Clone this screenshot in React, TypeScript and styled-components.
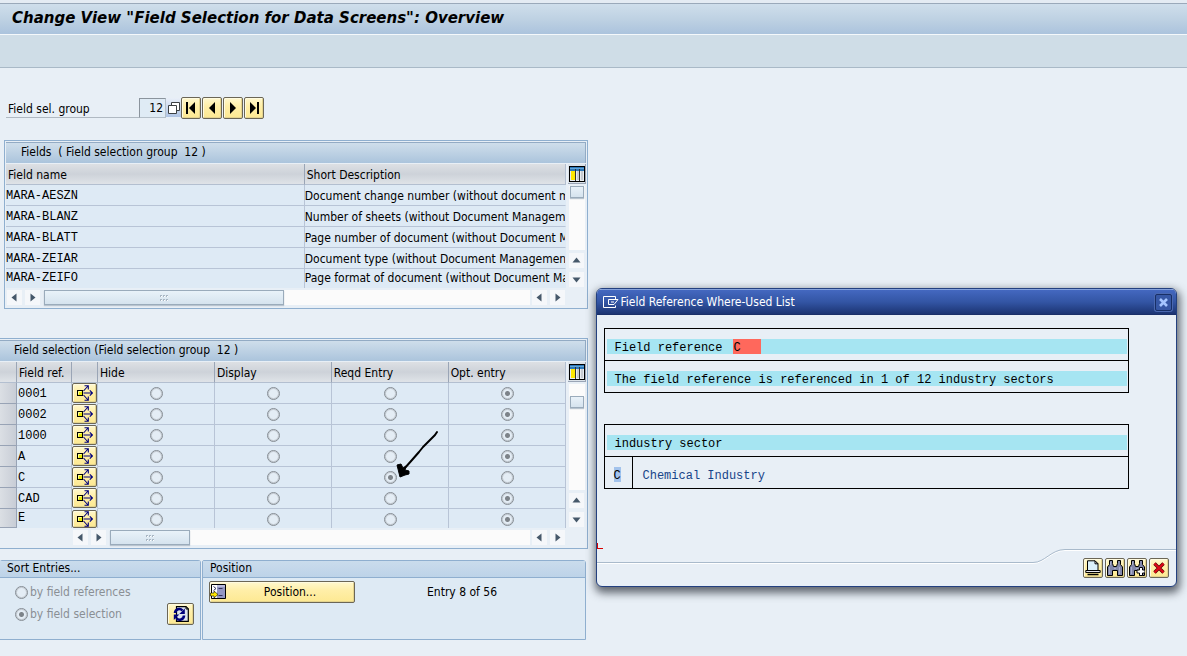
import React from "react";
import styled, { createGlobalStyle } from "styled-components";

const SANS = `"DejaVu Sans Condensed", "DejaVu Sans", sans-serif`;
const MONO = `"Liberation Mono", "Courier New", monospace`;

const GlobalStyle = createGlobalStyle`
  *, *::before, *::after { box-sizing: border-box; }
  body {
    margin: 0;
    background: #e8eff6;
    color: #000;
    font: 12px/16px ${SANS};
  }
  button, input { font: inherit; color: inherit; margin: 0; }
`;

const Page = styled.div`
  position: relative;
  min-height: 100vh;
  overflow: hidden;
`;

const TitleBar = styled.header`
  height: 35px;
  border-top: 3px solid #e4ebf3;
  border-bottom: 1px solid #f4f8fb;
  box-shadow: inset 0 1px 0 #9aa9ba;
  background: linear-gradient(#d0dfec, #bfd2e3 50%, #abc3dd);
  padding: 0 12px;
`;

const Title = styled.h1`
  margin: 0;
  font: italic bold 15px/30px "DejaVu Sans", sans-serif;
  white-space: pre;
`;

const Toolbar = styled.div`
  height: 33px;
  background: #cfdde7;
  border-bottom: 1px solid #a9b9c7;
`;

const Main = styled.main`
  width: calc(50% - 6px);
`;

const FieldRow = styled.div`
  display: flex;
  align-items: flex-end;
  padding: 29px 0 0 6px;
`;

const FieldLabel = styled.label`
  width: 133px;
  height: 20px;
  padding: 3px 2px 0;
  border-bottom: 1px solid #b0b9c2;
  margin-bottom: 1px;
`;

const FieldInput = styled.input`
  width: 27px;
  height: 20px;
  margin-bottom: 1px;
  padding: 0 2px;
  text-align: right;
  background: #dfebf5;
  border: 1px solid #b4bfc9;
  border-top-color: #8b949d;
  border-left-color: #8b949d;
  border-radius: 0;
  outline: none;
`;

const HelpButton = styled.button`
  width: 15px;
  height: 19px;
  margin-bottom: 2px;
  padding: 0;
  border: 0;
  background: linear-gradient(#e9eff8, #afc4e4);
  display: grid;
  place-items: center;
`;

const GoldButton = styled.button<{ $w?: number; $h?: number }>`
  width: ${(p) => p.$w ?? 20}px;
  height: ${(p) => p.$h ?? 22}px;
  padding: 0;
  border: 1px solid #6b6656;
  border-radius: 2px;
  box-shadow: inset 1px 1px 0 #fffbe0, inset -1px -1px 0 #e4d48e;
  background: linear-gradient(#fff8cf, #ffefa9 40%, #fde992);
  display: flex;
  align-items: center;
  justify-content: center;
  flex: none;
  svg { display: block; flex: none; }
`;

const NavButtons = styled.div`
  display: flex;
  gap: 1px;
`;

const Panel = styled.section<{ $cut?: boolean }>`
  border: 1px solid #8fafcf;
  border-left-width: ${(p) => (p.$cut ? 0 : 1)}px;
  margin-left: ${(p) => (p.$cut ? 0 : 4)}px;
  padding: 1px 1px 2px ${(p) => (p.$cut ? 0 : 1)}px;
`;

const PanelTitle = styled.h2<{ $indent: number }>`
  margin: 0;
  height: 21px;
  padding-left: ${(p) => p.$indent}px;
  border: 1px solid #93abc4;
  border-width: 1px 1px 0 0;
  background: linear-gradient(#cfdeeb, #abc4dc);
  font: 12px/18px ${SANS};
  white-space: pre;
  overflow: hidden;
`;

const GridArea = styled.div`
  display: flex;
  margin-top: 1px;
`;

const TableWrap = styled.div`
  flex: 1;
  min-width: 0;
  overflow: hidden;
`;

const Table = styled.table`
  width: 100%;
  table-layout: fixed;
  border-collapse: separate;
  border-spacing: 0;
`;

const Th = styled.th`
  height: 21px;
  padding: 2px 2px 0;
  text-align: left;
  font-weight: normal;
  white-space: nowrap;
  background: linear-gradient(#dde0e4, #cdd2d9 50%, #dfe3e8);
  border-bottom: 1px solid #b3bfd0;
  border-right: 1px solid #9aa5b6;
  &:last-child { border-right-color: #b3bfd0; }
`;

const Td = styled.td<{ $mono?: boolean; $left?: number }>`
  position: relative;
  height: 21px;
  padding: 2px 0 0 ${(p) => p.$left ?? 0}px;
  line-height: 18px;
  background: #deeaf5;
  border-bottom: 1px solid #b8c4d6;
  border-right: 1px solid #b8c4d6;
  white-space: nowrap;
  overflow: hidden;
  font-family: ${(p) => (p.$mono ? MONO : SANS)};
  tr:last-child > & { height: 19px; padding-top: 0; line-height: 19px; border-bottom: 0; }
`;

const DescTd = styled(Td)`
  border-right-color: #deeaf5;
`;

const ButtonTd = styled(Td)`
  padding: 0;
  overflow: visible;
  border-bottom-color: transparent;
`;

const RowHead = styled.td`
  padding: 0;
  background: linear-gradient(90deg, #dbdfe4, #c8cdd6);
  border-right: 1px solid #98a3b5;
  border-bottom: 1px solid #98a3b5;
`;

const RadioTd = styled(Td)`
  padding: 0 0 0 2px;
  text-align: center;
  overflow: visible;
  tr:last-child > & { line-height: 18px; }
`;

const Radio = styled.input.attrs({ type: "radio" })`
  appearance: none;
  width: 13px;
  height: 13px;
  border: 1px solid #868d94;
  border-radius: 50%;
  box-shadow: inset 0 0 0 1px #c3cad1;
  background: #e4edf5;
  vertical-align: middle;
  display: inline-block;
  &:checked {
    background: radial-gradient(circle, #7d8389 0 2px, #e4edf5 3px);
  }
`;

const ScrollButton = styled.button`
  width: 15px;
  height: 15px;
  margin: 0 2px 1px 1px;
  padding: 0;
  border: 0;
  background: #f5f7fa;
  display: grid;
  place-items: center;
  flex: none;
`;

const Side = styled.div`
  width: 20px;
  padding-left: 2px;
  flex: none;
  display: flex;
  flex-direction: column;
  align-items: center;
  ${ScrollButton} { margin-top: 3px; }
`;

const ConfigButton = styled.button`
  width: 18px;
  height: 20px;
  padding: 0;
  border: 0;
  border-right: 1px solid #9aa5b6;
  border-bottom: 1px solid #9aa5b6;
  background: #dce3ea;
  display: grid;
  align-items: center;
  justify-items: end;
`;

const VTrack = styled.div<{ $top: number }>`
  flex: 1;
  width: 16px;
  margin-top: 2px;
  padding: ${(p) => p.$top}px 1px 0;
  background: #fbfbfb;
`;

const Thumb = styled.div<{ $w?: number }>`
  width: ${(p) => (p.$w ? p.$w + "px" : "100%")};
  height: ${(p) => (p.$w ? 15 : 12)}px;
  border: 1px solid #9aabbb;
  box-shadow: 0 1px 1px #b8c4cf;
  background: linear-gradient(#e9f2f9, #d5e3ee);
  display: grid;
  place-items: center;
  flex: none;
`;

const HScroll = styled.div<{ $indent: number }>`
  display: flex;
  padding: 2px 19px 0 ${(p) => p.$indent}px;
  align-items: flex-start;
`;

const HTrack = styled.div`
  flex: 1;
  height: 15px;
  margin: 0 1px 0 2px;
  background: #fbfbfb;
`;

const Bottom = styled.div`
  display: flex;
  gap: 1px;
  margin: 11px 2px 0 0;
`;

const Box = styled.section<{ $w?: number }>`
  flex: ${(p) => (p.$w ? `0 0 ${p.$w}px` : "1")};
  height: 80px;
  border: 1px solid #8fafcf;
  border-left-width: ${(p) => (p.$w ? 0 : 1)}px;
  border-radius: 2px 3px 0 0;
  background: #deeaf4;
`;

const BoxTitle = styled.h2`
  margin: 0;
  height: 17px;
  padding-left: 7px;
  background: linear-gradient(#cadcec, #bdd3e8);
  border-bottom: 1px solid #8fafcf;
  font: 12px/15px ${SANS};
`;

const SortBody = styled.div`
  display: flex;
  justify-content: space-between;
  align-items: flex-end;
  padding: 3px 6px 0 15px;
`;

const RadioLabel = styled.label`
  display: flex;
  align-items: center;
  gap: 2px;
  height: 22px;
  color: #8a8f95;
`;

const PositionBody = styled.div`
  display: flex;
  align-items: center;
  padding: 3px 6px;
  gap: 72px;
`;

const PositionText = styled.span`
  flex: 1;
  text-align: center;
`;

const Dialog = styled.div`
  position: absolute;
  z-index: 2;
  top: 288px;
  left: calc(50% + 2px);
  right: 10px;
  border: 1px solid #23407f;
  border-radius: 6px;
  background: #e8eff6;
  box-shadow: 1px 4px 9px 2px rgba(40, 46, 56, 0.7);
  overflow: hidden;
`;

const DialogTitle = styled.header`
  height: 26px;
  display: flex;
  align-items: center;
  padding: 0 4px 0 6px;
  gap: 2px;
  color: #fff;
  border-top: 1px solid #86a3dc;
  border-bottom: 1px solid #1a2f68;
  background: linear-gradient(#4468c0, #3355a4 50%, #1c3472);
`;

const DialogName = styled.h2`
  margin: 0;
  flex: 1;
  font: 12px/16px ${SANS};
`;

const CloseButton = styled.button`
  width: 17px;
  height: 17px;
  padding: 0;
  border: 1px solid #182f66;
  border-radius: 2px;
  background: #3657a5;
  box-shadow: 0 0 0 1px #4a68b0;
  display: grid;
  place-items: center;
`;

const DialogBody = styled.div`
  padding: 13px 47px 55px 7px;
  font-family: ${MONO};
`;

const ListTable = styled.table`
  width: 100%;
  border-collapse: collapse;
  & + & { margin-top: 31px; }
`;

const ListTd = styled.td<{ $w?: number }>`
  height: 32px;
  width: ${(p) => (p.$w ? p.$w + "px" : "auto")};
  padding: 6px 1px 2px 2px;
  border: 1px solid #000;
  line-height: 18px;
`;

const Band = styled.div`
  height: 15px;
  padding-left: 8px;
  background: #a6e5f2;
  white-space: pre;
`;

const RedMark = styled.span`
  display: inline-block;
  width: 28px;
  height: 15px;
  margin-left: 10px;
  padding-left: 1px;
  background: #ff685c;
  vertical-align: top;
`;

const KeyMark = styled.span`
  display: block;
  width: 7px;
  height: 15px;
  margin-left: 7px;
  background: #a3c3ec;
`;

const Sector = styled.span`
  display: block;
  height: 15px;
  padding-left: 8px;
  color: #174489;
`;

const Cursor = styled.i`
  position: absolute;
  left: 0;
  bottom: 37px;
  width: 6px;
  height: 6px;
  border: 1px solid #d80000;
  border-width: 0 0 1px 1px;
`;

const Footer = styled.footer`
  display: flex;
  height: 42px;
`;

const FooterLine = styled.div<{ $low?: boolean }>`
  ${(p) => (p.$low ? "flex: 1; margin-top: 18px;" : "margin-top: 5px;")}
  padding: 8px 7px 0 18px;
  border-top: 1px solid #a9bacb;
  box-shadow: inset 0 1px 0 #fff;
  display: flex;
  gap: 2px;
`;

const CurveSvg = styled.svg`
  display: block;
  flex: none;
`;

const MarkerSvg = styled.svg`
  position: absolute;
  z-index: 1;
  left: 60px;
  top: -37px;
  pointer-events: none;
`;

type Dir = "left" | "right" | "up" | "down";
const turn = { right: 0, down: 90, left: 180, up: 270 };

const Arrow = ({ dir }: { dir: Dir }) => (
  <svg width="9" height="9" viewBox="-4.5 -4.5 9 9" aria-hidden="true">
    <path d="M-2-4L3 0L-2 4Z" fill="#46586a" transform={`rotate(${turn[dir]})`} />
  </svg>
);

const NavIcon = ({ dir, bar }: { dir: "left" | "right"; bar?: boolean }) => (
  <svg width="14" height="14" viewBox="-7 -7 14 14" aria-hidden="true">
    <g transform={dir === "left" ? "scale(-1 1)" : undefined}>
      <path d={bar ? "M-4-6L2 0L-4 6Z" : "M-3-6L3 0L-3 6Z"} />
      {bar && <path d="M3-6h2V6h-2Z" />}
    </g>
  </svg>
);

const Grip = () => (
  <svg width="9" height="6" viewBox="0 0 9 6" aria-hidden="true">
    {[0, 3, 6].map((x) => (
      <React.Fragment key={x}>
        <path d={`M${x} 0h2v2h-2z M${x} 4h2v2h-2z`} fill="#a9b7c4" />
        <path d={`M${x + 1} 1h1v1h-1z M${x + 1} 5h1v1h-1z`} fill="#fff" />
      </React.Fragment>
    ))}
  </svg>
);

const ConfigIcon = () => (
  <svg width="16" height="16" viewBox="0 0 16 16" shapeRendering="crispEdges" aria-hidden="true">
    <path d="M0 0h16v16H0z" />
    <path d="M1 1h14v14H1z" fill="#e8ecf0" />
    <path d="M1 1h14v4H1z" fill="#2c78b8" />
    <path d="M1 2h14v1H1z" fill="#63a5d8" />
    <path d="M2 5h4v9H2z" fill="#ffe800" />
    <path d="M8 5h2v9H8zM12 5h2v9h-2z" fill="#c8ccd2" />
    <path d="M6 3h1v12H6zM10 3h1v12h-1z" fill="#333" />
  </svg>
);

const SpreadIcon = () => (
  <svg width="16" height="16" viewBox="0 0 16 16" fill="none" aria-hidden="true">
    <path
      d="M6.5 6L11 1M7.5.7H11.3V4.5M6.5 8H15.3M12.8 5.3L15.5 8L12.8 10.7M6.5 10L11 15M7.5 15.3H11.3V11.5"
      stroke="#00007c"
      strokeWidth="1.1"
    />
    <rect x=".5" y="5.5" width="5" height="5" fill="#e8e800" stroke="#000" />
    <path d="M1.5 9.5V6.5H4.5" stroke="#ffffa0" />
  </svg>
);

const RefreshIcon = () => (
  <svg width="18" height="16" viewBox="0 0 18 16" aria-hidden="true">
    <path d="M4.5.7H14L16.3 3V15.3H4.5Z" fill="#dfe5ee" stroke="#000" strokeWidth="1.2" />
    <path d="M14 .7V3H16.3Z" fill="#fff" stroke="#000" />
    <path d="M3 7A4.3 4.3 0 0 1 10.5 4.5" fill="none" stroke="#00007c" strokeWidth="2.6" />
    <path d="M12.8 2.5V8H7.3Z" fill="#00007c" />
    <path d="M12 9.5A4.3 4.3 0 0 1 4.3 12" fill="none" stroke="#00007c" strokeWidth="2.6" />
    <path d="M1.8 14V8.5H7.3Z" fill="#00007c" />
  </svg>
);

const PositionIcon = () => (
  <svg width="16" height="16" viewBox="0 0 16 16" aria-hidden="true">
    <path d="M1.5.5h14v14h-14z" fill="#9497c2" stroke="#000" />
    <path d="M2 1h5v13H2z" fill="#fff" />
    <path d="M7 1h8v2H7z" fill="#b9bbdc" />
    <path d="M3.5 2.5l2.5 2L3.5 6.5M8.5 4.5h4M8.5 11.5h4" fill="none" stroke="#34345c" />
    <path d="M.5 9H4V7L8 10.5L4 14V12H.5Z" fill="#ffe800" stroke="#000" strokeWidth=".6" />
  </svg>
);

const HelpIcon = () => (
  <svg width="12" height="12" viewBox="0 0 12 12" aria-hidden="true">
    <path d="M3.5.5h8v8h-8z" fill="#fff" stroke="#3c4043" />
    <path d="M.5 3.5h8v8h-8z" fill="#fff" stroke="#3c4043" />
  </svg>
);

const WindowIcon = () => (
  <svg width="16" height="12" viewBox="0 0 16 12" fill="none" stroke="#fff" aria-hidden="true">
    <path d="M12.5 3V.5H.5V11.5H12.5V9.5M5.5 3.5H15L11 8.5H5.5ZM8 6h3" />
  </svg>
);

const CloseIcon = () => (
  <svg width="9" height="9" viewBox="0 0 9 9" aria-hidden="true">
    <path d="M1 1L8 8M8 1L1 8" stroke="#a5c5ff" strokeWidth="2.6" />
  </svg>
);

const PrintIcon = () => (
  <svg width="16" height="16" viewBox="0 0 16 16" aria-hidden="true">
    <path d="M2.5 10.5V.8H10L13 3.8V10.5Z" fill="#dcf0fa" stroke="#000" />
    <path d="M10 .8V3.8H13Z" fill="#fff" stroke="#000" />
    <path d="M.8 10.5H15.2V12.5H.8Z" fill="#e6e6f0" stroke="#000" />
    <path d="M2.5 14.5H13.5" stroke="#000" strokeWidth="1.6" />
  </svg>
);

const FindIcon = ({ more }: { more?: boolean }) => (
  <svg width="16" height="16" viewBox="0 0 16 16" aria-hidden="true">
    <path
      d="M2.5.5H5.5V3.5L6.5 6.5H9.5L10.5 3.5V.5H13.5V4.5L15.5 7V15.5H10.5V10.5H5.5V15.5H.5V7L2.5 4.5Z"
      fill="#8287ab"
      stroke="#000"
    />
    <path d="M2.5 7V14M3.5 2V5M12.5 7V14M7 8.5H9" stroke="#a9adcc" />
    {more && (
      <path d="M10.5 7.5h3v2.5H16v3h-2.5V15.5h-3v-2.5H8v-3h2.5Z" fill="#fff" stroke="#000" />
    )}
  </svg>
);

const CancelIcon = () => (
  <svg width="12" height="12" viewBox="0 0 12 12" aria-hidden="true">
    <path d="M1.5 1.5L10.5 10.5M10.5 1.5L1.5 10.5" stroke="#5a0000" strokeWidth="3.4" />
    <path d="M1.5 1.5L10.5 10.5M10.5 1.5L1.5 10.5" stroke="#e00818" strokeWidth="2" />
  </svg>
);

const Marker = () => (
  <MarkerSvg width="50" height="52" viewBox="0 0 50 52" aria-hidden="true">
    <path
      d="M45 2L43 5L35 13L31 17L27 22L20 30L12 39"
      fill="none"
      stroke="#000"
      strokeWidth="2"
      strokeLinecap="round"
      strokeLinejoin="round"
    />
    <path d="M5 35L9 34L11 38L14 36L13 40L17 41L17 44L13 45L8 47L7 43Z" stroke="#000" strokeLinejoin="round" />
  </MarkerSvg>
);

const fields = [
  ["MARA-AESZN", "Document change number (without document management system)"],
  ["MARA-BLANZ", "Number of sheets (without Document Management system)"],
  ["MARA-BLATT", "Page number of document (without Document Management system)"],
  ["MARA-ZEIAR", "Document type (without Document Management system)"],
  ["MARA-ZEIFO", "Page format of document (without Document Management system)"],
];

const modes = ["Hide", "Display", "Reqd Entry", "Opt. entry"];
const refs: [string, number][] = [
  ["0001", 3],
  ["0002", 3],
  ["1000", 3],
  ["A", 3],
  ["C", 2],
  ["CAD", 3],
  ["E", 3],
];

const SideScroll = ({ top }: { top: number }) => (
  <Side>
    <ConfigButton aria-label="Configuration"><ConfigIcon /></ConfigButton>
    <VTrack $top={top}><Thumb /></VTrack>
    <ScrollButton aria-label="Scroll up"><Arrow dir="up" /></ScrollButton>
    <ScrollButton aria-label="Scroll down"><Arrow dir="down" /></ScrollButton>
  </Side>
);

const BottomScroll = ({ indent, thumb }: { indent: number; thumb: number }) => (
  <HScroll $indent={indent}>
    <ScrollButton aria-label="Scroll left"><Arrow dir="left" /></ScrollButton>
    <ScrollButton aria-label="Scroll right"><Arrow dir="right" /></ScrollButton>
    <HTrack><Thumb $w={thumb}><Grip /></Thumb></HTrack>
    <ScrollButton aria-label="Scroll left"><Arrow dir="left" /></ScrollButton>
    <ScrollButton aria-label="Scroll right"><Arrow dir="right" /></ScrollButton>
  </HScroll>
);

const LowerPanel = styled(Panel)`
  margin-top: 29px;
`;

const UpperPanel = styled(Panel)`
  margin-top: 21px;
`;

export default function App() {
  return (
    <Page>
      <GlobalStyle />
      <TitleBar>
        <Title>Change View "Field Selection for Data Screens": Overview</Title>
      </TitleBar>
      <Toolbar />
      <Main>
        <FieldRow>
          <FieldLabel htmlFor="group">Field sel. group</FieldLabel>
          <FieldInput id="group" defaultValue="12" />
          <HelpButton aria-label="Possible entries"><HelpIcon /></HelpButton>
          <NavButtons>
            <GoldButton aria-label="First"><NavIcon dir="left" bar /></GoldButton>
            <GoldButton aria-label="Previous"><NavIcon dir="left" /></GoldButton>
            <GoldButton aria-label="Next"><NavIcon dir="right" /></GoldButton>
            <GoldButton aria-label="Last"><NavIcon dir="right" bar /></GoldButton>
          </NavButtons>
        </FieldRow>

        <UpperPanel>
          <PanelTitle $indent={15}>{"Fields  ( Field selection group  12 )"}</PanelTitle>
          <GridArea>
            <TableWrap>
              <Table>
                <colgroup>
                  <col style={{ width: "53.4%" }} />
                  <col />
                </colgroup>
                <thead>
                  <tr><Th>Field name</Th><Th>Short Description</Th></tr>
                </thead>
                <tbody>
                  {fields.map(([name, text]) => (
                    <tr key={name}>
                      <Td $mono>{name}</Td>
                      <DescTd>{text}</DescTd>
                    </tr>
                  ))}
                </tbody>
              </Table>
            </TableWrap>
            <SideScroll top={0} />
          </GridArea>
          <BottomScroll indent={0} thumb={240} />
        </UpperPanel>

        <LowerPanel $cut>
          <PanelTitle $indent={14}>{"Field selection (Field selection group  12 )"}</PanelTitle>
          <GridArea>
            <TableWrap>
              <Table>
                <colgroup>
                  <col width="17" />
                  <col width="55" />
                  <col width="26" />
                  <col /><col /><col /><col />
                </colgroup>
                <thead>
                  <tr>
                    <Th /><Th>Field ref.</Th><Th />
                    {modes.map((m) => <Th key={m}>{m}</Th>)}
                  </tr>
                </thead>
                <tbody>
                  {refs.map(([ref, mode], row) => (
                    <tr key={ref}>
                      <RowHead />
                      <Td $mono $left={1}>{ref}</Td>
                      <ButtonTd>
                        <GoldButton $w={25} $h={row === refs.length - 1 ? 18 : 20} aria-label={`Assign ${ref}`}>
                          <SpreadIcon />
                        </GoldButton>
                      </ButtonTd>
                      {modes.map((m, i) => (
                        <RadioTd key={m}>
                          <Radio name={`ref-${ref}`} aria-label={`${ref} ${m}`} defaultChecked={i === mode} disabled />
                          {ref === "C" && i === 2 && <Marker />}
                        </RadioTd>
                      ))}
                    </tr>
                  ))}
                </tbody>
              </Table>
            </TableWrap>
            <SideScroll top={12} />
          </GridArea>
          <BottomScroll indent={72} thumb={80} />
        </LowerPanel>

        <Bottom>
          <Box $w={201}>
            <BoxTitle>Sort Entries...</BoxTitle>
            <SortBody>
              <div>
                <RadioLabel><Radio name="sort" disabled />by field references</RadioLabel>
                <RadioLabel><Radio name="sort" disabled defaultChecked />by field selection</RadioLabel>
              </div>
              <GoldButton $w={27} aria-label="Sort"><RefreshIcon /></GoldButton>
            </SortBody>
          </Box>
          <Box>
            <BoxTitle>Position</BoxTitle>
            <PositionBody>
              <GoldButton $w={146}>
                <PositionIcon />
                <PositionText>Position...</PositionText>
              </GoldButton>
              <span>Entry 8 of 56</span>
            </PositionBody>
          </Box>
        </Bottom>
      </Main>

      <Dialog role="dialog" aria-label="Field Reference Where-Used List">
        <DialogTitle>
          <WindowIcon />
          <DialogName>Field Reference Where-Used List</DialogName>
          <CloseButton aria-label="Close"><CloseIcon /></CloseButton>
        </DialogTitle>
        <DialogBody>
          <ListTable>
            <tbody>
              <tr><ListTd><Band>Field reference<RedMark>C</RedMark></Band></ListTd></tr>
              <tr><ListTd><Band>The field reference is referenced in 1 of 12 industry sectors</Band></ListTd></tr>
            </tbody>
          </ListTable>
          <ListTable>
            <tbody>
              <tr><ListTd colSpan={2}><Band>industry sector</Band></ListTd></tr>
              <tr>
                <ListTd $w={28}><KeyMark>C</KeyMark></ListTd>
                <ListTd><Sector>Chemical Industry</Sector></ListTd>
              </tr>
            </tbody>
          </ListTable>
        </DialogBody>
        <Cursor />
        <Footer>
          <FooterLine $low />
          <CurveSvg width="32" height="24" viewBox="0 0 32 24" fill="none">
            <path d="M0 19.5C12 19.5 18 6.5 32 6.5" stroke="#fff" />
            <path d="M0 18.5C12 18.5 18 5.5 32 5.5" stroke="#a9bacb" />
          </CurveSvg>
          <FooterLine>
            <GoldButton $h={20} aria-label="Print"><PrintIcon /></GoldButton>
            <GoldButton $h={20} aria-label="Find"><FindIcon /></GoldButton>
            <GoldButton $h={20} aria-label="Find next"><FindIcon more /></GoldButton>
            <GoldButton $h={20} aria-label="Cancel"><CancelIcon /></GoldButton>
          </FooterLine>
        </Footer>
      </Dialog>
    </Page>
  );
}
